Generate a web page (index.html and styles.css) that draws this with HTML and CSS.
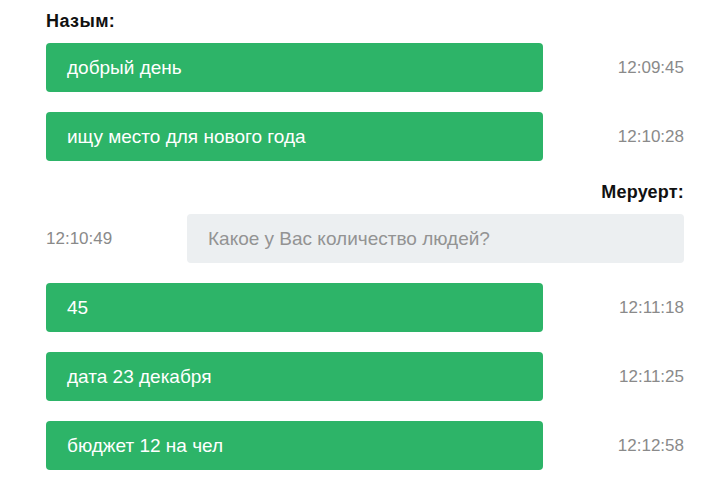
FILE: index.html
```html
<!DOCTYPE html>
<html>
<head>
  <meta charset="UTF-8">
  <meta name="viewport" content="width=device-width, initial-scale=1.0"/>
  <title>Чат</title>
  <link rel="stylesheet" href="styles.css">
</head>
<body>
<div class="chat">
  <div class="author">Назым:</div>
  <div class="msg">
    <div class="bubble client">добрый день</div>
    <div class="time">12:09:45</div>
  </div>
  <div class="msg">
    <div class="bubble client">ищу место для нового года</div>
    <div class="time">12:10:28</div>
  </div>

  <div class="author right">Меруерт:</div>
  <div class="msg">
    <div class="time left">12:10:49</div>
    <div class="bubble manager">Какое у Вас количество людей?</div>
  </div>

  <div class="msg">
    <div class="bubble client">45</div>
    <div class="time">12:11:18</div>
  </div>
  <div class="msg">
    <div class="bubble client">дата 23 декабря</div>
    <div class="time">12:11:25</div>
  </div>
  <div class="msg">
    <div class="bubble client">бюджет 12 на чел</div>
    <div class="time">12:12:58</div>
  </div>
</div>
</body>
</html>
```

FILE: styles.css
```css
body {
  margin: 0;
  font-family: "Liberation Sans", Arial, sans-serif;
  background: #fff;
}
.chat {
  width: 638px;
  margin-left: 46px;
  padding-top: 10px;
}
.author {
  font-size: 18px;
  font-weight: bold;
  letter-spacing: 0.4px;
  line-height: 22px;
  color: #111;
  margin-bottom: 11px;
}
.author.right {
  text-align: right;
  letter-spacing: 0.2px;
  margin-top: 18px;
  margin-bottom: 11px;
}
.msg {
  display: flex;
  align-items: center;
  justify-content: space-between;
  margin-bottom: 20px;
}
.bubble {
  width: 497px;
  box-sizing: border-box;
  height: 49px;
  padding: 0 21px;
  font-size: 19px;
  line-height: 49px;
  border-radius: 4px;
}
.client {
  background-color: #2db468;
  color: #fff;
}
.manager {
  background-color: #eceff1;
  color: #939393;
}
.time {
  font-size: 17px;
  color: #8a8a8a;
}
```
